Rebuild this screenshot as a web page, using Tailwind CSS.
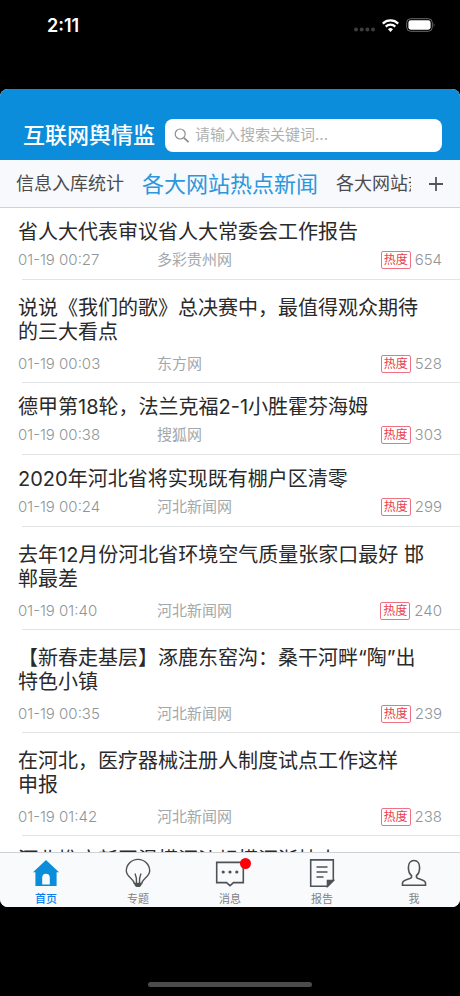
<!DOCTYPE html>
<html lang="zh-CN">

<head>
  <meta charset="UTF-8" />
  <meta name="viewport" content="width=device-width, initial-scale=1.0" />
  <title>互联网舆情监测</title>
  <script src="https://cdn.jsdelivr.net/npm/@tailwindcss/browser@4"></script>
</head>

<body class="bg-black font-['Inter','Noto_Sans_CJK_SC',sans-serif]">
  <div class="flex flex-col h-screen overflow-hidden">

    <!-- Status bar -->
    <div class="h-[89px] shrink-0 flex items-start justify-between pl-[47px] pr-6 pt-3 text-white">
      <span class="text-lg leading-7 font-semibold">2:11</span>
      <div class="flex items-center gap-[7px] h-[26px]">
        <svg class="w-[21px] h-[5px] mt-[9px]" viewBox="0 0 21 5" fill="#3d3d3f">
          <circle cx="2" cy="2.5" r="2" /><circle cx="7.7" cy="2.5" r="2" /><circle cx="13.4" cy="2.5" r="2" /><circle cx="19" cy="2.5" r="2" />
        </svg>
        <svg class="w-[17px] h-[13px]" viewBox="0 0 17 13" fill="none" stroke="white" stroke-width="2.2">
          <path d="M0.8 4.6a11 11 0 0 1 15.4 0" />
          <path d="M3.7 7.6a7 7 0 0 1 9.6 0" />
          <path d="M8.5 13l-2.5-2.7a3.6 3.6 0 0 1 5 0z" fill="white" stroke="none" />
        </svg>
        <svg class="w-[30px] h-[14px]" viewBox="0 0 30 14">
          <rect x="0.7" y="0.7" width="25.6" height="12.6" rx="4" fill="none" stroke="#6b6b6b" stroke-width="1" />
          <rect x="2.4" y="2.3" width="22.2" height="9.4" rx="2.4" fill="white" />
          <path d="M27.7 4.8q1.7 2.2 0 4.4z" fill="#6b6b6b" />
        </svg>
      </div>
    </div>

    <!-- App -->
    <div class="flex-1 min-h-0 flex flex-col bg-white rounded-lg overflow-hidden">

      <!-- Header -->
      <header class="bg-[#0b8ddb] flex items-center gap-2.5 pl-[23px] pr-[18px] pt-[30px] pb-2">
        <h1 class="text-[22px] leading-[33px] font-medium text-white whitespace-nowrap shrink-0">互联网舆情监</h1>
        <label class="flex-1 min-w-0 h-[33px] flex items-center gap-1 bg-white rounded-lg px-2">
          <svg class="w-[18px] h-[18px] shrink-0" viewBox="0 0 18 18" fill="none" stroke="#8e8e8e" stroke-width="1.2">
            <circle cx="7.2" cy="7" r="5" /><path d="M11 10.8l4.6 4.4" stroke-width="1.8" />
          </svg>
          <input type="search" aria-label="搜索" placeholder="请输入搜索关键词..." class="flex-1 min-w-0 text-[15px] outline-none placeholder:text-[#b0b0b0]" />
        </label>
      </header>

      <!-- Tabs -->
      <nav class="h-12 shrink-0 flex items-center bg-[#f7f9fc] border-b border-[#cfd1d4] pl-4 text-lg leading-6 text-[#4c4c4c]">
        <div class="flex-1 min-w-0 flex items-center gap-[18px] overflow-hidden whitespace-nowrap">
          <a href="#">信息入库统计</a>
          <a href="#" class="text-[22px] text-[#2b97dc]">各大网站热点新闻</a>
          <a href="#">各大网站热点</a>
        </div>
        <button type="button" aria-label="添加" class="w-[49px] flex justify-center">
          <svg class="w-4 h-4" viewBox="0 0 16 16" stroke="#555" stroke-width="1.8"><path d="M8 1v14M1 8h14" /></svg>
        </button>
      </nav>

      <!-- News list -->
      <ul id="news" class="flex-1 min-h-0 overflow-hidden"></ul>

      <!-- Bottom bar -->
      <nav class="h-[55px] shrink-0 grid grid-cols-5 bg-[#f9fafb] border-t border-[#cfd1d4] text-[11px] leading-4 text-[#828282]">
        <a href="#" class="flex flex-col items-center pt-[5px] gap-[3px] text-[#0b7ff0] font-medium">
          <svg class="w-[30px] h-[30px]" viewBox="0 0 30 30" fill="#0b8ddb">
            <path d="M15 2L28 14.2H25.6V28H4.4V14.2H2z" />
            <path d="M11.2 26.6V19.5a3.8 3.8 0 0 1 7.6 0v7.1z" fill="#f9fafb" />
          </svg>
          首页
        </a>
        <a href="#" class="flex flex-col items-center pt-[5px] gap-[3px]">
          <svg class="w-[30px] h-[30px]" viewBox="0 0 30 30" fill="none" stroke="#4f5254" stroke-width="1.4">
            <path d="M11.3 25.5C10.8 20.5 3.3 19 3.3 12.8a11.7 11.4 0 0 1 23.4 0c0 6.2-7.5 7.7-8 12.7z" />
            <path d="M12 15.5q2 4.5 1.5 9.5M18 15.5q-2 4.5-1.5 9.5" />
            <path d="M11 25h8l-1 3-1.5 1h-3L12 28z" fill="#4f5254" stroke="none" />
          </svg>
          专题
        </a>
        <a href="#" class="flex flex-col items-center pt-[5px] gap-[3px]">
          <span class="relative">
            <svg class="w-[30px] h-[30px]" viewBox="0 0 30 30" fill="none" stroke="#4f5254" stroke-width="1.6">
              <path d="M1.7 4.4H28.3V24.6H18.5L15 27.6L11.5 24.6H1.7z" />
              <g fill="#4f5254" stroke="none"><circle cx="8.2" cy="14" r="1.6" /><circle cx="15" cy="14" r="1.6" /><circle cx="21.8" cy="14" r="1.6" /></g>
            </svg>
            <span class="absolute top-0 -right-1.5 w-[11px] h-[11px] rounded-full bg-[#ff0008]"></span>
          </span>
          消息
        </a>
        <a href="#" class="flex flex-col items-center pt-[5px] gap-[3px]">
          <svg class="w-[30px] h-[30px]" viewBox="0 0 30 30" fill="none" stroke="#4f5254" stroke-width="1.6">
            <path d="M3.7 1.9H26.3V22.5L20.5 28.3H3.7z" />
            <path d="M9.5 9h11M9.5 14h11M9.5 19h7" />
            <path d="M20.5 28.3V22.5H26.3z" fill="#4f5254" />
          </svg>
          报告
        </a>
        <a href="#" class="flex flex-col items-center pt-[5px] gap-[3px]">
          <svg class="w-[30px] h-[30px]" viewBox="0 0 30 30" fill="none" stroke="#4f5254" stroke-width="1.6">
            <path d="M12.5 17.5C10.5 16 9.4 12.5 9.4 9.5C9.4 5.5 11.5 2.5 15 2.5S20.6 5.5 20.6 9.5C20.6 12.5 19.5 16 17.5 17.5V19.5C19 21.5 26.5 21.5 26.5 25V27.3H3.5V25C3.5 21.5 11 21.5 12.5 19.5z" />
          </svg>
          我
        </a>
      </nav>
    </div>

    <!-- Home indicator -->
    <div class="h-[89px] shrink-0 flex items-end justify-center pb-[9px]">
      <div class="w-[164px] h-[5px] rounded-full bg-[#4b4b4b]"></div>
    </div>
  </div>

  <script>
    const news = [
      { title: ['省人大代表审议省人大常委会工作报告'], time: '01-19 00:27', source: '多彩贵州网', heat: 654 },
      { title: ['说说《我们的歌》总决赛中，最值得观众期待', '的三大看点'], time: '01-19 00:03', source: '东方网', heat: 528 },
      { title: ['德甲第18轮，法兰克福2-1小胜霍芬海姆'], time: '01-19 00:38', source: '搜狐网', heat: 303 },
      { title: ['2020年河北省将实现既有棚户区清零'], time: '01-19 00:24', source: '河北新闻网', heat: 299 },
      { title: ['去年12月份河北省环境空气质量张家口最好 邯', '郸最差'], time: '01-19 01:40', source: '河北新闻网', heat: 240 },
      { title: ['【新春走基层】涿鹿东窑沟：桑干河畔“陶”出', '特色小镇'], time: '01-19 00:35', source: '河北新闻网', heat: 239 },
      { title: ['在河北，医疗器械注册人制度试点工作这样', '申报'], time: '01-19 01:42', source: '河北新闻网', heat: 238 },
      { title: ['河北推广新国温模沉沙规模沉浙技大'] }
    ];

    document.getElementById('news').innerHTML = news.map(item => {
      const long = item.title.length > 1;
      const meta = item.time ? `
          <div class="${long ? 'mt-2.5' : 'mt-1.5'} h-5 flex items-center text-[15px] text-[#a2a8ab]">
            <span class="w-[139px] font-light text-[#8f9699]">${item.time}</span>
            <span class="flex-1">${item.source}</span>
            <span class="border border-[#f0717f] rounded-xs px-0.5 text-xs leading-4 text-[#e8404f] mr-1">热度</span>
            <span class="font-light text-[#8f9699]">${item.heat}</span>
          </div>` : '';
      return `
      <li class="pl-[18px]">
        <a href="#" class="block pr-[18px] ${long ? 'pt-4 pb-2' : 'pt-3 pb-[9px]'}">
          <h2 class="text-xl leading-6 text-[#2a2a2a] whitespace-nowrap">${item.title.join('<br>')}</h2>${meta}
        </a>
        <div class="ml-1 h-px bg-[#e2e3e5]"></div>
      </li>`;
    }).join('');
  </script>
</body>

</html>
